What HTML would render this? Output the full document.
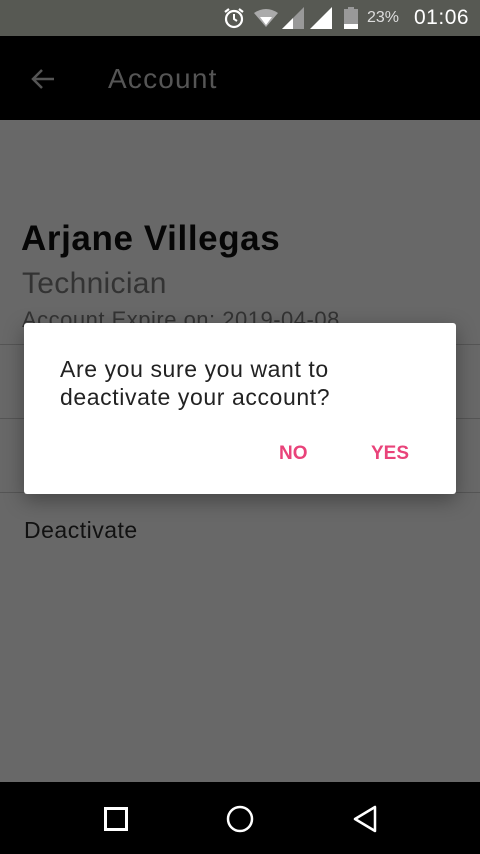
<!DOCTYPE html>
<html><head><meta charset="utf-8"><style>
*{margin:0;padding:0;box-sizing:border-box}
body{width:480px;height:854px;overflow:hidden;background:#686868;font-family:"Liberation Sans",sans-serif;position:relative}
.sb{position:absolute;top:0;left:0;width:480px;height:36px;background:#575953;color:#fff}
.tb{position:absolute;top:36px;left:0;width:480px;height:84px;background:#000}
.abs{position:absolute;white-space:nowrap}
.div{position:absolute;left:0;width:480px;height:1px;background:#555}
.nav{position:absolute;top:782px;left:0;width:480px;height:72px;background:#000}
.dlg{position:absolute;left:24px;top:323px;width:432px;height:171px;background:#fff;border-radius:3px;box-shadow:0 6px 20px rgba(0,0,0,.35)}
</style></head><body>
<div class="sb">
<svg class="abs" style="left:222px;top:7px" width="24" height="22" viewBox="0 0 24 22"><circle cx="12" cy="12" r="8" fill="none" stroke="#fff" stroke-width="2.2"/><path d="M12 7v5l3 2" stroke="#fff" stroke-width="2" fill="none"/><path d="M3 5l4-3M21 5l-4-3" stroke="#fff" stroke-width="2.2"/></svg>
<svg class="abs" style="left:253px;top:8px" width="26" height="20" viewBox="0 0 26 20"><path d="M1 5Q13-3 25 5L13 19Z" fill="#aaa"/><path d="M7 9h12L13 17Z" fill="#fff"/></svg>
<svg class="abs" style="left:282px;top:7px" width="22" height="22"><path d="M22 0V22H0Z" fill="#999"/><path d="M11 11V22H0Z" fill="#fff"/></svg>
<svg class="abs" style="left:310px;top:7px" width="22" height="22"><path d="M22 0V22H0Z" fill="#fff"/></svg>
<svg class="abs" style="left:344px;top:7px" width="14" height="22"><rect x="4" y="0" width="6" height="2" fill="#999"/><rect x="0" y="2" width="14" height="20" fill="#999"/><rect x="0" y="17" width="14" height="5" fill="#fff"/></svg>
<div class="abs" style="left:367px;top:9px;font-size:16px;color:#ddd">23%</div>
<div class="abs" style="left:414px;top:6px;font-size:21px;color:#fff;letter-spacing:.5px">01:06</div>
</div>
<div class="tb">
<svg class="abs" style="left:30px;top:32px" width="26" height="22" viewBox="0 0 26 22"><path d="M24 11H3M12 2L3 11l9 9" stroke="#555" stroke-width="2.5" fill="none"/></svg>
<div class="abs" style="left:108px;top:27px;font-size:28px;color:#555;letter-spacing:1.2px">Account</div>
</div>
<div class="abs" style="left:21px;top:219px;font-size:35px;font-weight:bold;color:#060606;letter-spacing:.6px">Arjane Villegas</div>
<div class="abs" style="left:22px;top:267px;font-size:30px;color:#333;letter-spacing:.3px">Technician</div>
<div class="abs" style="left:22px;top:307px;font-size:22px;color:#333;letter-spacing:.5px">Account Expire on: 2019-04-08</div>
<div class="div" style="top:344px"></div>
<div class="div" style="top:418px"></div>
<div class="div" style="top:492px"></div>
<div class="abs" style="left:24px;top:517px;font-size:23px;color:#111;letter-spacing:.5px">Deactivate</div>
<div class="dlg">
<div class="abs" style="left:36px;top:32px;font-size:23px;line-height:28px;color:#222;letter-spacing:.6px">Are you sure you want to<br>deactivate your account?</div>
<div class="abs" style="left:255px;top:120px;font-size:19px;font-weight:bold;color:#e9437a">NO</div>
<div class="abs" style="left:347px;top:120px;font-size:19px;font-weight:bold;color:#e9437a">YES</div>
</div>
<div class="nav">
<svg class="abs" style="left:104px;top:25px" width="24" height="24"><rect x="1.5" y="1.5" width="21" height="21" fill="none" stroke="#fff" stroke-width="3"/></svg>
<svg class="abs" style="left:226px;top:23px" width="28" height="28"><circle cx="14" cy="14" r="12" fill="none" stroke="#fff" stroke-width="2.5"/></svg>
<svg class="abs" style="left:352px;top:23px" width="26" height="28"><path d="M23 2V26L3 14Z" fill="none" stroke="#fff" stroke-width="2.5" stroke-linejoin="round"/></svg>
</div>
</body></html>
